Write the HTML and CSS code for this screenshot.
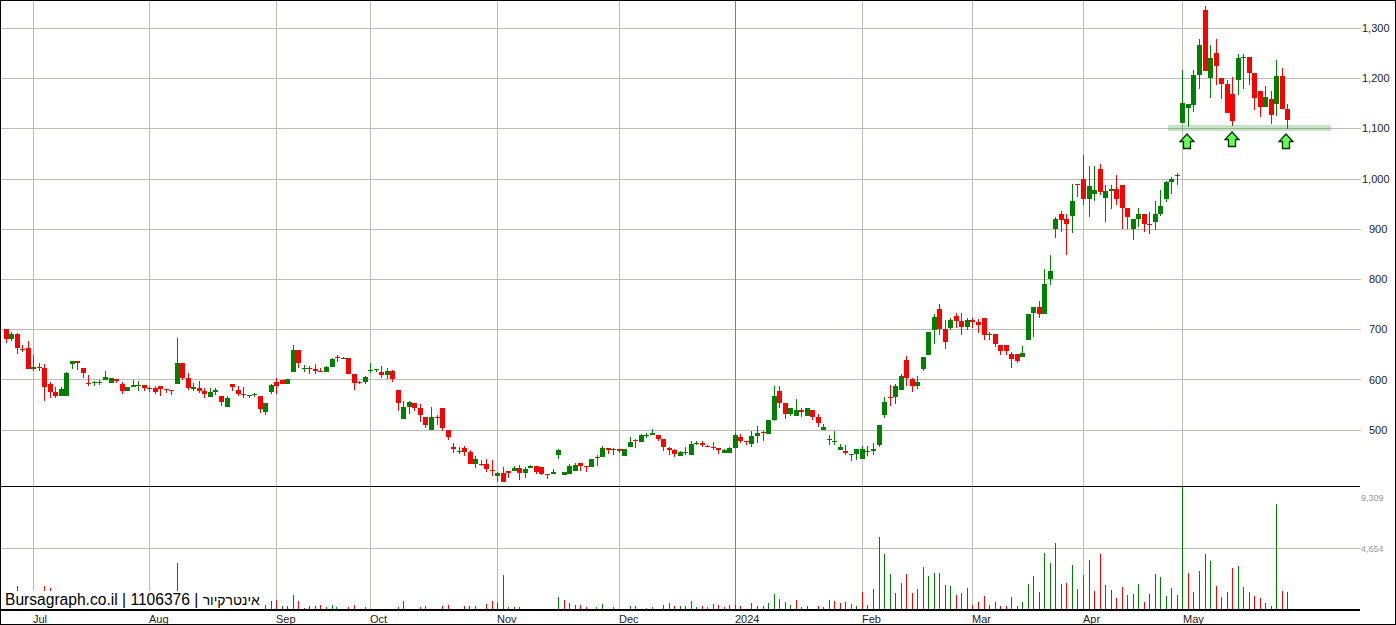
FILE: index.html
```html
<!DOCTYPE html>
<html lang="en">
<head>
<meta charset="utf-8">
<title>Bursagraph</title>
<link rel="stylesheet" href="styles.css">
</head>
<body>
<div class="chart">
  <svg id="plot" class="plot" width="1396" height="625" viewBox="0 0 1396 625">
    <g class="grid">
      <line x1="1" x2="1361" y1="28.5" y2="28.5"/><line x1="1" x2="1361" y1="78.5" y2="78.5"/>
      <line x1="1" x2="1361" y1="128.5" y2="128.5"/><line x1="1" x2="1361" y1="179.5" y2="179.5"/>
      <line x1="1" x2="1361" y1="229.5" y2="229.5"/><line x1="1" x2="1361" y1="279.5" y2="279.5"/>
      <line x1="1" x2="1361" y1="329.5" y2="329.5"/><line x1="1" x2="1361" y1="379.5" y2="379.5"/>
      <line x1="1" x2="1361" y1="430.5" y2="430.5"/><line x1="1" x2="1361" y1="548.5" y2="548.5"/>
      <line x1="33.5" x2="33.5" y1="1" y2="610"/><line x1="149.5" x2="149.5" y1="1" y2="610"/>
      <line x1="276.5" x2="276.5" y1="1" y2="610"/><line x1="370.5" x2="370.5" y1="1" y2="610"/>
      <line x1="497.5" x2="497.5" y1="1" y2="610"/><line x1="619.5" x2="619.5" y1="1" y2="610"/>
      <line class="year" x1="735.5" x2="735.5" y1="1" y2="610"/><line x1="862.5" x2="862.5" y1="1" y2="610"/>
      <line x1="972.5" x2="972.5" y1="1" y2="610"/><line x1="1083.5" x2="1083.5" y1="1" y2="610"/>
      <line x1="1182.5" x2="1182.5" y1="1" y2="610"/>
    </g>
    <g id="volume"></g>
    <g id="candles"></g>
    <rect class="band" x="1168" y="125" width="163" height="6"/>
    <g class="arrows">
      <polygon points="1187,134 1194,141.5 1190.5,141.5 1190.5,148.5 1183.5,148.5 1183.5,141.5 1180,141.5"/>
      <polygon points="1232,132 1239,139.5 1235.5,139.5 1235.5,146.5 1228.5,146.5 1228.5,139.5 1225,139.5"/>
      <polygon points="1286,134 1293,141.5 1289.5,141.5 1289.5,148.5 1282.5,148.5 1282.5,141.5 1279,141.5"/>
    </g>
    <line class="axis" x1="1" x2="1360" y1="486.5" y2="486.5"/>
    <rect class="axis-base" x="1" y="609" width="1359" height="2"/>
    <g class="price-labels">
      <text x="1362" y="32">1,300</text><text x="1362" y="82">1,200</text><text x="1362" y="132">1,100</text>
      <text x="1362" y="183">1,000</text><text x="1369" y="233">900</text><text x="1369" y="283">800</text>
      <text x="1369" y="333">700</text><text x="1369" y="384">600</text><text x="1369" y="434">500</text>
    </g>
    <g class="volume-labels">
      <text x="1361" y="501">9,309</text><text x="1361" y="552">4,654</text>
    </g>
    <g class="month-labels">
      <text x="33" y="623">Jul</text><text x="149" y="623">Aug</text><text x="276" y="623">Sep</text>
      <text x="370" y="623">Oct</text><text x="497" y="623">Nov</text><text x="619" y="623">Dec</text>
      <text x="735" y="623">2024</text><text x="862" y="623">Feb</text><text x="972" y="623">Mar</text>
      <text x="1083" y="623">Apr</text><text x="1183" y="623">May</text>
    </g>
    <rect class="frame" x="0.5" y="0.5" width="1395" height="624"/>
  </svg>
  <div class="title">Bursagraph.co.il | 1106376 | <span class="title-he">אינטרקיור</span></div>
</div>
<script src="chart.js"></script>
</body>
</html>
```
FILE: styles.css
```css
html, body {
  margin: 0;
  padding: 0;
  background: #fff;
  overflow: hidden;
}
.chart {
  position: relative;
  width: 1396px;
  height: 625px;
  font-family: "Liberation Sans", Arial, sans-serif;
}
.plot {
  display: block;
}
.grid line {
  stroke: #c0bcb4;
  stroke-width: 1;
  shape-rendering: crispEdges;
}
.grid line.year {
  stroke: #808080;
}
.axis {
  stroke: #000;
  stroke-width: 1;
  shape-rendering: crispEdges;
}
.axis-base {
  fill: #000;
  shape-rendering: crispEdges;
}
.frame {
  fill: none;
  stroke: #000;
  stroke-width: 1;
  shape-rendering: crispEdges;
}
.up {
  fill: #008000;
  shape-rendering: crispEdges;
}
.down {
  fill: #ff0000;
  shape-rendering: crispEdges;
}
.band {
  fill: rgba(0, 128, 0, 0.22);
  shape-rendering: crispEdges;
}
.arrows polygon {
  fill: #66ff55;
  stroke: #0a2e0a;
  stroke-width: 1.3;
  stroke-linejoin: miter;
}
.price-labels text {
  font: 11px "Liberation Sans", Arial, sans-serif;
  fill: #222;
}
.volume-labels text {
  font: 9px "Liberation Sans", Arial, sans-serif;
  fill: #999;
}
.month-labels text {
  font: 11px "Liberation Sans", Arial, sans-serif;
  fill: #222;
}
.title {
  position: absolute;
  left: 1px;
  top: 591px;
  width: 259px;
  height: 18px;
  line-height: 18px;
  padding: 0 0 0 4px;
  background: #fff;
  color: #000;
  font-size: 15.6px;
  white-space: nowrap;
}
.title-he {
  font-size: 13.9px;
}
```
FILE: chart.js
```js
// Candle readings: [x, up?, high, bodyTop, bodyBottom, low], in units of (px * 3) from each origin.
var candleSets = [
  { ox: 0, oy: 320, d: [
    [19,0,27,27,56,68],[34,1,36,42,56,62],[52,0,39,42,83,101],[67,0,75,87,90,95],[85,0,63,84,146,146],[100,1,105,141,146,152],
    [118,0,129,141,144,152],[133,0,132,144,201,243],[151,0,186,192,216,234],[166,0,201,216,228,234],[184,1,201,207,228,228],[199,1,156,159,228,228],
    [217,1,123,123,132,147],[232,0,123,123,129,150],[250,0,144,144,159,174],[265,0,165,189,192,198],[283,1,183,186,189,198],[298,1,180,186,189,195],
    [316,1,153,171,180,180],[334,1,174,174,189,189],[349,0,177,177,183,189],[367,0,186,192,213,222],[382,1,201,201,213,213],[400,1,180,195,201,201],
    [415,1,183,195,198,213],[433,0,195,195,204,213],[448,0,198,204,207,216],[466,0,198,204,216,222],[481,0,198,198,207,228],[499,0,207,207,210,219],
    [514,0,210,210,213,225],[532,1,54,129,192,192],[547,0,129,129,174,180],[565,0,159,174,204,210],[580,1,189,201,207,213],[598,0,183,204,213,219],
    [613,0,204,213,222,234],[631,1,204,216,231,231],[646,1,204,210,216,225],[664,0,228,228,246,258],[682,1,228,234,261,261],[697,0,192,192,201,213],
    [715,0,198,210,222,228],[730,0,201,222,225,234],[748,1,225,225,228,234],[763,1,219,222,225,231],[781,0,228,228,267,279],[796,1,249,249,276,285],
    [814,1,192,195,216,222],[829,0,174,186,198,222],[847,0,180,180,192,192],[862,1,177,177,192,192],[880,1,75,90,156,156],[895,0,90,90,129,144]
  ]},
  { ox: 290, oy: 340, d: [
    [43,1,75,84,87,96],[58,0,78,84,87,102],[76,0,72,87,93,102],[91,0,84,93,96,96],[109,1,78,81,96,96],[127,1,54,57,81,81],
    [142,0,45,51,54,66],[160,1,51,54,57,57],[175,0,54,54,102,102],[193,0,102,102,129,150],[208,0,123,126,129,132],[226,1,108,111,126,132],
    [241,1,69,90,93,99],[259,1,87,87,90,96],[274,0,78,96,105,114],[292,1,84,93,105,117],[307,0,90,93,117,126],[325,0,150,150,189,213],
    [340,1,183,201,237,237],[358,1,183,186,201,222],[373,0,189,189,204,213],[391,0,192,204,225,246],[406,0,231,231,255,264],[424,1,201,231,270,270],
    [442,0,225,231,234,255],[457,0,204,204,264,273],[475,0,270,270,291,300],[490,0,309,321,327,339],[508,1,321,333,336,342],[523,0,318,324,336,348],
    [541,0,330,336,372,372],[556,1,348,357,372,384],[574,0,360,372,375,378],[589,0,357,372,387,396],[607,0,360,390,393,408],[622,1,396,399,408,426],
    [640,0,381,399,426,426],[655,0,393,393,399,414],[673,1,378,384,393,393],[688,0,375,384,399,420],[706,1,381,387,399,414],[721,1,375,378,384,384],
    [739,0,378,378,396,402],[754,0,381,381,402,405],[772,0,402,402,405,417],[790,1,387,396,402,402],[805,1,327,330,345,357],[823,1,396,396,405,405],
    [838,1,372,378,402,402],[856,1,369,375,393,393],[871,0,369,369,378,393],[889,0,378,378,381,396]
  ]},
  { ox: 580, oy: 380, d: [
    [34,1,237,237,261,261],[52,1,225,231,234,258],[67,1,198,204,231,231],[85,0,204,204,210,222],[100,1,204,207,210,225],[118,0,207,207,213,219],
    [133,1,207,207,228,228],[151,1,171,186,201,201],[166,0,177,180,183,204],[184,1,162,165,186,186],[199,1,159,165,168,174],[217,1,147,159,165,165],
    [235,0,165,165,177,183],[250,0,177,177,201,213],[268,0,201,204,210,225],[283,0,207,210,222,231],[301,1,213,216,228,228],[316,1,201,216,219,225],
    [334,1,183,192,225,225],[349,1,183,189,192,195],[367,0,183,189,195,201],[382,0,195,198,201,201],[400,0,186,201,204,210],[415,0,204,204,210,222],
    [433,1,207,210,219,219],[448,1,201,204,219,219],[466,1,159,165,204,204],[481,0,162,171,183,189],[499,0,183,183,186,195],[514,1,153,168,192,201],
    [532,1,138,159,168,189],[550,0,153,156,159,183],[565,1,120,120,162,162],[583,1,18,48,120,123],[598,0,18,33,69,84],[616,0,69,69,102,117],
    [631,1,84,84,102,108],[649,1,57,90,108,108],[664,0,84,90,96,111],[682,1,84,84,108,108],[697,0,90,90,111,120],[715,0,102,111,129,141],
    [730,1,132,141,150,150],[748,1,165,177,180,195],[763,1,153,183,186,195],[781,1,192,201,210,210],[796,0,195,213,219,225],[814,1,222,222,225,243],
    [829,1,207,207,222,240],[847,1,198,207,237,237],[862,1,198,213,216,228],[880,1,189,207,213,225]
  ]},
  { ox: 870, oy: 240, d: [
    [28,1,555,555,615,621],[43,1,471,486,525,534],[61,0,435,471,474,498],[76,1,432,438,471,492],[94,1,402,408,450,450],[109,0,348,360,414,438],
    [127,0,414,417,438,456],[142,1,408,426,438,447],[160,1,351,351,387,393],[175,1,276,276,345,345],[193,1,222,231,270,312],[208,0,192,207,267,285],
    [226,0,240,267,306,327],[241,1,234,240,264,270],[259,0,219,228,243,264],[274,0,219,243,261,285],[292,1,234,240,261,270],[307,0,234,240,246,264],
    [325,0,237,246,255,279],[343,0,234,234,285,300],[358,1,276,282,285,300],[376,0,282,282,312,321],[391,0,315,315,333,345],[409,0,315,315,333,345],
    [424,0,336,342,357,384],[442,0,342,342,363,369],[457,1,318,339,351,351],[475,1,222,222,300,300],[490,1,201,201,219,291],[508,0,183,201,222,234],
    [523,1,87,132,222,222],[541,1,45,93,117,135]
  ]},
  { ox: 1040, oy: 140, d: [
    [46,1,231,237,267,294],[64,0,213,222,240,276],[79,0,222,237,252,345],[97,1,132,183,228,279],[112,0,132,132,135,171],[130,0,45,117,177,195],
    [148,1,78,138,177,231],[163,1,78,150,162,183],[181,0,72,87,156,165],[196,1,135,153,174,246],[214,1,135,147,153,207],[229,0,105,147,177,195],
    [247,0,135,135,204,267],[262,0,204,204,231,267],[280,1,237,237,267,300],[295,1,204,222,237,261],[313,0,222,222,252,276],[328,0,216,252,255,282],
    [346,1,183,222,246,270],[361,1,150,198,222,228],[379,1,123,126,177,186],[394,1,111,117,126,162],[412,1,99,105,108,135]
  ]},
  { ox: 1160, oy: 0, d: [
    [67,1,210,309,369,369],[85,1,312,312,324,381],[100,1,210,225,315,336],[118,1,117,135,225,267],[136,0,18,30,213,213],[151,1,135,174,234,294],
    [169,0,117,159,198,255],[184,0,234,234,252,297],[202,0,240,252,339,339],[217,0,231,282,363,378],[235,1,162,174,240,285],[250,1,162,171,174,267],
    [268,0,171,171,219,255],[283,0,219,219,294,330],[301,0,273,273,321,351],[316,1,258,291,321,321],[334,0,273,297,345,372],[349,1,180,228,312,348],
    [367,0,204,228,327,327],[382,0,312,327,360,387]
  ]}
];

// Volume readings: [x, up?, top], scaled by s from each origin.
var volumeSets = [
  { ox: 0, oy: 560, s: 3, d: [
    [52,0,78],[133,0,78],[151,0,84],[532,1,9],[796,1,135],[814,1,123],[829,0,120],[847,1,138],[862,1,138],[880,1,105],[895,0,123],[913,0,144],
    [928,0,138],[946,0,138],[961,0,135],[979,1,141]
  ]},
  { ox: 330, oy: 570, s: 2.904, d: [
    [7,1,102],[20,1,108],[38,0,112],[53,0,108],[71,0,102],[85,1,112],[102,1,108],[118,1,114],[148,0,114],[166,1,112],[181,0,114],[198,0,108],
    [213,0,90],[230,1,112],[245,0,114],[262,0,108],[277,0,105],[294,1,114],[312,0,114],[326,0,105],[344,0,102],[358,0,112],[375,0,112],[390,0,105],
    [406,0,105],[422,1,105],[438,0,112],[454,0,99],[471,0,90],[486,0,93],[503,0,15],[518,1,108],[535,1,108],[550,0,108],[567,1,112],[582,1,112],
    [599,0,112],[615,0,114],[631,0,112],[648,1,114],[663,1,78],[680,0,87],[695,1,96],[712,1,102],[727,0,102],[744,0,108],[760,1,112],[775,1,108],
    [791,1,99],[808,0,112],[823,1,108],[840,1,114],[855,1,115],[872,1,105],[887,0,105],[904,1,112],[920,1,110],[936,1,108],[952,0,112],[968,0,102],
    [985,0,96],[1000,0,105],[1017,1,105],[1032,1,105],[1049,1,90],[1065,1,108],[1081,0,105],[1096,0,108],[1113,0,99],[1128,0,102],[1145,0,108],[1160,1,102],
    [1177,1,102],[1193,0,105],[1210,0,112],[1223,1,96],[1241,1,105],[1258,0,105],[1273,1,96],[1290,1,69],[1305,0,84],[1322,0,93],[1337,1,102],[1354,0,87],
    [1369,0,108],[1386,1,105],[1401,0,112],[1418,0,105],[1433,0,108],[1450,0,87],[1465,0,90],[1482,0,96],[1497,0,93],[1514,0,99],[1530,1,105]
  ]},
  { ox: 860, oy: 530, s: 3, d: [
    [7,0,186],[22,1,225],[40,1,177],[58,1,21],[73,1,72],[91,1,132],[106,1,189],[124,1,159],[139,0,132],[157,0,189],[172,1,177],[190,1,111],
    [205,1,138],[223,1,129],[238,0,129],[256,0,165],[271,1,168],[289,0,195],[304,0,189],[322,1,174],[337,0,225],[355,0,216],[373,0,198],[388,1,225],
    [406,0,216],[421,0,228],[439,0,228],[454,0,201],[472,0,228],[487,1,216],[505,1,162],[520,1,138],[538,0,186],[553,1,69],[571,1,99],[586,1,39],
    [604,0,162],[619,0,159],[637,1,105],[652,1,177],[670,0,135],[688,1,90],[703,0,183],[721,0,72],[736,1,165],[754,1,180],[769,0,204],[787,0,171],[802,0,195]
  ]},
  { ox: 1130, oy: 480, s: 3, d: [
    [10,0,342],[25,1,312],[43,0,366],[58,0,342],[76,1,282],[91,1,291],[109,1,348],[124,1,324],[142,1,345],[157,1,18],[175,0,279],[190,1,336],
    [208,1,273],[226,0,222],[241,1,243],[259,0,318],[274,0,351],[292,0,336],[307,0,264],[325,1,258],[340,1,321],[358,0,336],[373,0,348],[391,0,354],
    [406,1,369],[424,0,378],[439,1,72],[457,0,333],[472,0,336]
  ]}
];

var SVG_NS = "http://www.w3.org/2000/svg";

function addRect(parent, cls, x, y, w, h) {
  if (h <= 0) return;
  var r = document.createElementNS(SVG_NS, "rect");
  r.setAttribute("class", cls);
  r.setAttribute("x", x);
  r.setAttribute("y", y);
  r.setAttribute("width", w);
  r.setAttribute("height", h);
  parent.appendChild(r);
}

var candles = document.getElementById("candles");
candleSets.forEach(function (set) {
  set.d.forEach(function (c) {
    var x = set.ox + Math.floor(c[0] / 3);
    var cls = c[1] ? "up" : "down";
    var hi = set.oy + Math.round(c[2] / 3);
    var top = set.oy + Math.round(c[3] / 3);
    var bot = set.oy + Math.round(c[4] / 3);
    var lo = set.oy + Math.round(c[5] / 3);
    addRect(candles, cls, x, hi, 1, lo - hi);
    addRect(candles, cls, x - 2, top, 5, bot - top);
  });
});

var volume = document.getElementById("volume");
volumeSets.forEach(function (set) {
  set.d.forEach(function (v) {
    var x = set.ox + Math.floor(v[0] / set.s);
    var top = set.oy + Math.round(v[2] / set.s);
    addRect(volume, v[1] ? "up" : "down", x, top, 1, 609 - top);
  });
});
```
